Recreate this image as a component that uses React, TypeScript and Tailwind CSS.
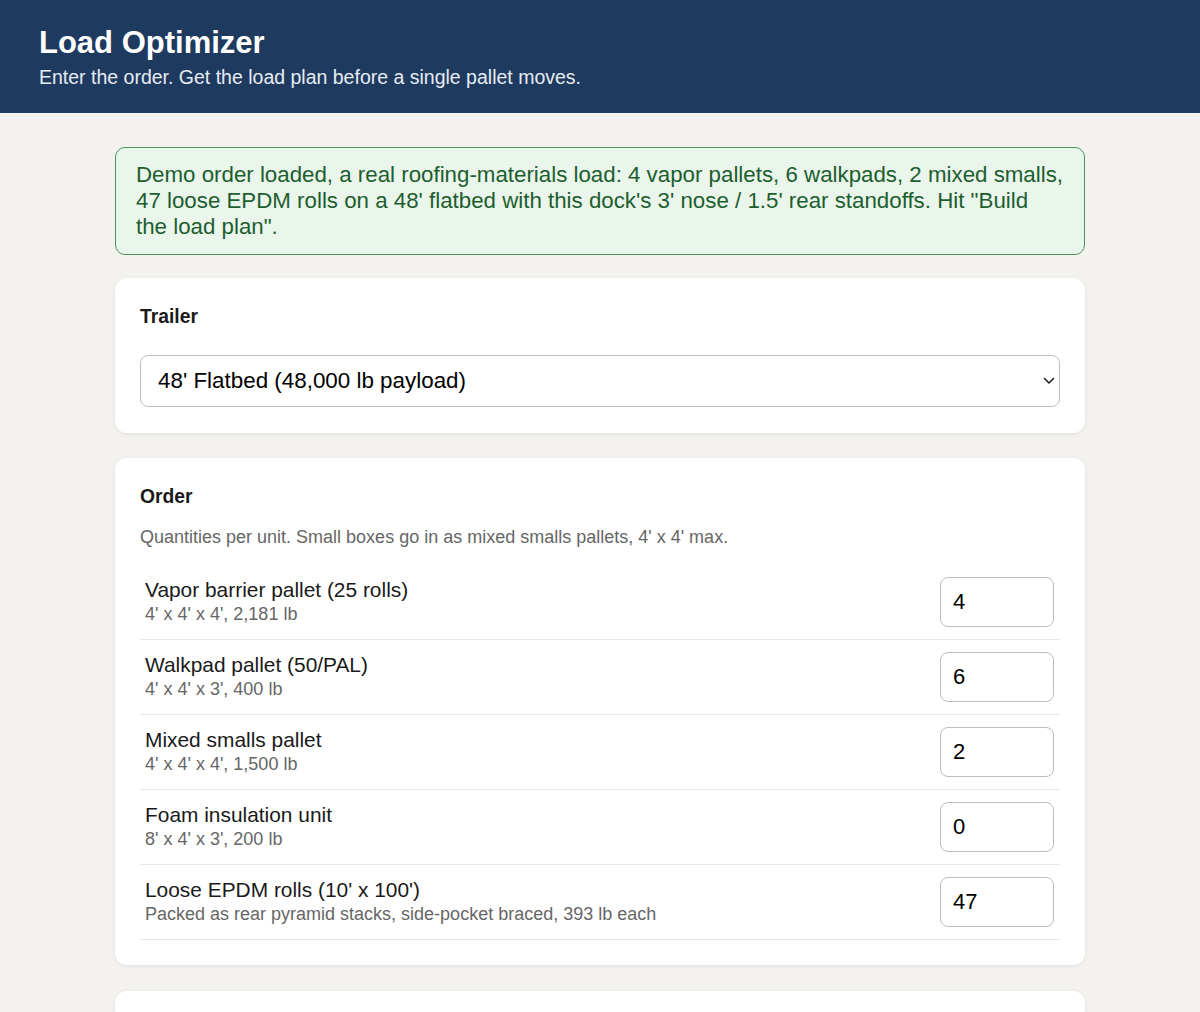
import React, { useState } from 'react';

interface OrderLine {
  id: string;
  name: string;
  detail: string;
  qty: number;
}

const initialOrder: OrderLine[] = [
  { id: 'vapor', name: 'Vapor barrier pallet (25 rolls)', detail: "4' x 4' x 4', 2,181 lb", qty: 4 },
  { id: 'walkpad', name: 'Walkpad pallet (50/PAL)', detail: "4' x 4' x 3', 400 lb", qty: 6 },
  { id: 'smalls', name: 'Mixed smalls pallet', detail: "4' x 4' x 4', 1,500 lb", qty: 2 },
  { id: 'foam', name: 'Foam insulation unit', detail: "8' x 4' x 3', 200 lb", qty: 0 },
  { id: 'epdm', name: "Loose EPDM rolls (10' x 100')", detail: 'Packed as rear pyramid stacks, side-pocket braced, 393 lb each', qty: 47 },
];

const trailers = [
  "48' Flatbed (48,000 lb payload)",
  "53' Flatbed (46,000 lb payload)",
  "48' Step Deck (44,000 lb payload)",
];

const App: React.FC = () => {
  const [trailer, setTrailer] = useState(trailers[0]);
  const [order, setOrder] = useState(initialOrder);

  const setQty = (id: string, value: string) => {
    const n = parseInt(value, 10);
    setOrder((prev) => prev.map((l) => (l.id === id ? { ...l, qty: isNaN(n) ? 0 : n } : l)));
  };

  return (
    <div className="min-h-screen bg-[#f4f2ee] font-['Liberation_Sans',Arial,sans-serif] text-[#1a1a1a]">
      {/* Header */}
      <header className="bg-[#1f3a5f] px-[39px] pt-[25px] pb-6 text-white">
        <h1 className="text-[31px] font-bold leading-[36px]">Load Optimizer</h1>
        <p className="mt-1 text-[19.5px] leading-[24px] text-[#e6ecf3]">
          Enter the order. Get the load plan before a single pallet moves.
        </p>
      </header>

      <main className="mx-auto w-[970px] pt-[34px] pb-10">
        {/* Demo notice */}
        <div className="rounded-[10px] border border-[#4f8f5f] bg-[#eaf5ec] px-5 py-[14px] text-[22.3px] leading-[26px] text-[#1d5e2f]">
          Demo order loaded, a real roofing-materials load: 4 vapor pallets, 6 walkpads, 2 mixed smalls, 47 loose
          EPDM rolls on a 48' flatbed with this dock's 3' nose / 1.5' rear standoffs. Hit "Build the load plan".
        </div>

        {/* Trailer */}
        <section className="mt-[23px] rounded-[12px] bg-white px-[25px] pt-[25px] pb-[26px] shadow-[0_1px_4px_rgba(0,0,0,0.08)]">
          <h2 className="text-[19.3px] font-bold leading-[28px]">Trailer</h2>
          <div className="relative mt-6">
            <select
              value={trailer}
              onChange={(e) => setTrailer(e.target.value)}
              className="h-[52px] w-full appearance-none rounded-[8px] border border-[#bdbdbd] bg-white pl-[17px] pr-10 text-[22.4px] text-black outline-none"
            >
              {trailers.map((t) => (
                <option key={t} value={t}>
                  {t}
                </option>
              ))}
            </select>
            <svg
              className="pointer-events-none absolute right-[5px] top-1/2 -translate-y-1/2"
              width="12"
              height="8"
              viewBox="0 0 12 8"
              fill="none"
            >
              <path d="M1.5 1.5l4.5 4.5 4.5-4.5" stroke="#222" strokeWidth="1.6" strokeLinecap="round" strokeLinejoin="round" />
            </svg>
          </div>
        </section>

        {/* Order */}
        <section className="mt-[25px] rounded-[12px] bg-white px-[25px] pt-[25px] pb-[25px] shadow-[0_1px_4px_rgba(0,0,0,0.08)]">
          <h2 className="text-[19.3px] font-bold leading-[28px]">Order</h2>
          <p className="mt-[14px] text-[18px] leading-[24px] text-[#666]">
            Quantities per unit. Small boxes go in as mixed smalls pallets, 4' x 4' max.
          </p>
          <div className="mt-4">
            {order.map((line) => (
              <div
                key={line.id}
                className="flex items-center justify-between border-b border-[#e8e8e8] py-3 pl-[5px] pr-[6px]"
              >
                <div>
                  <div className="text-[20.9px] leading-[24px] text-[#1a1a1a]">{line.name}</div>
                  <div className="text-[18px] leading-[24px] text-[#666]">{line.detail}</div>
                </div>
                <input
                  type="number"
                  value={line.qty}
                  onChange={(e) => setQty(line.id, e.target.value)}
                  className="h-[50px] w-[114px] rounded-[8px] border border-[#bdbdbd] bg-white pl-3 text-[22px] text-black outline-none [appearance:textfield] [&::-webkit-inner-spin-button]:appearance-none"
                />
              </div>
            ))}
          </div>
        </section>

        {/* Next panel */}
        <section className="mt-[26px] h-[200px] rounded-[12px] bg-white shadow-[0_1px_4px_rgba(0,0,0,0.08)]" />
      </main>
    </div>
  );
};

export default App;
